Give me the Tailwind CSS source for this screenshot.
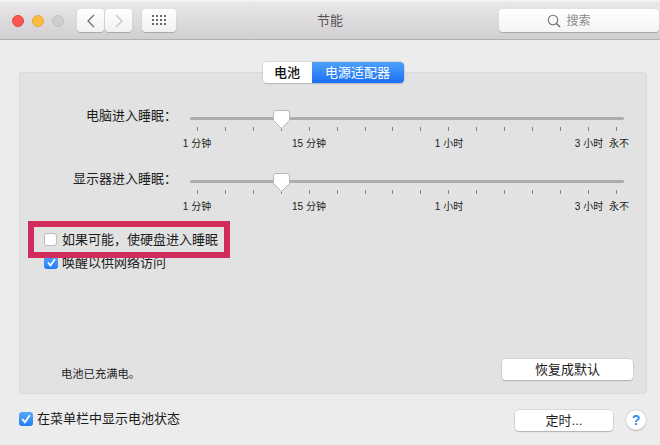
<!doctype html>
<html lang="zh">
<head>
<meta charset="utf-8">
<script src="https://cdn.jsdelivr.net/npm/@tailwindcss/browser@4"></script>
</head>
<body class="m-0">
<div class="relative flex h-[445px] w-[660px] flex-col overflow-hidden bg-[#ececec] font-['Liberation_Sans','Noto_Sans_CJK_SC',sans-serif] text-[13px] text-[#1c1c1c]">
  <!-- title bar -->
  <header class="relative flex h-[40px] shrink-0 items-center border-b border-b-[#b1b1b1] border-t-2 border-t-[#f2f2f2] bg-gradient-to-b from-[#e9e7e9] to-[#d1cfd1] pl-3 pr-[1px]">
    <div class="flex gap-2">
      <span class="h-3 w-3 rounded-full border border-[#e2463f] bg-[#fc5753]"></span>
      <span class="h-3 w-3 rounded-full border border-[#e1a73e] bg-[#fdbc40]"></span>
      <span class="h-3 w-3 rounded-full border border-[#c0c0c0] bg-[#cecece]"></span>
    </div>
    <div class="ml-[13px] flex gap-[1px]">
      <button class="flex h-[23px] w-[27px] items-center justify-center rounded-[4px] bg-gradient-to-b from-white to-[#f1f1f1] shadow-[0_1px_1px_#a8a8a8]">
        <svg width="10" height="14" viewBox="0 0 10 14" fill="none" stroke="#707070" stroke-width="1.3"><path d="M8 1 2 7l6 6"/></svg>
      </button>
      <button class="flex h-[23px] w-[27px] items-center justify-center rounded-[4px] bg-gradient-to-b from-white to-[#f1f1f1] shadow-[0_1px_1px_#a8a8a8]">
        <svg width="10" height="14" viewBox="0 0 10 14" fill="none" stroke="#c4c4c4" stroke-width="1.3"><path d="m2 1 6 6-6 6"/></svg>
      </button>
    </div>
    <button class="ml-[10px] flex h-[23px] w-[34px] items-center justify-center rounded-[4px] bg-gradient-to-b from-white to-[#f1f1f1] shadow-[0_1px_1px_#a8a8a8]">
      <svg width="15" height="11" viewBox="0 0 15 11" fill="#6b6b6b">
        <rect x="0" y="0" width="2" height="2"/><rect x="4" y="0" width="2" height="2"/><rect x="8" y="0" width="2" height="2"/><rect x="12" y="0" width="2" height="2"/>
        <rect x="0" y="4" width="2" height="2"/><rect x="4" y="4" width="2" height="2"/><rect x="8" y="4" width="2" height="2"/><rect x="12" y="4" width="2" height="2"/>
        <rect x="0" y="8" width="2" height="2"/><rect x="4" y="8" width="2" height="2"/><rect x="8" y="8" width="2" height="2"/><rect x="12" y="8" width="2" height="2"/>
      </svg>
    </button>
    <h1 class="absolute left-[305px] w-[50px] text-center text-[13px] font-normal leading-none text-[#555]">节能</h1>
    <div class="ml-auto flex h-[23px] w-[160px] items-center justify-center gap-[5px] rounded-[4px] bg-gradient-to-b from-white to-[#f4f4f4] pr-[20px] text-[12px] text-[#8a8a8a] shadow-[0_1px_1px_#a8a8a8]">
      <svg width="14" height="14" viewBox="0 0 14 14" fill="none" stroke="#6e6e6e" stroke-width="1.1"><circle cx="6" cy="6" r="4.7"/><path d="m9.4 9.4 3.6 3.6" stroke-width="1.4"/></svg>
      <span>搜索</span>
    </div>
  </header>

  <main class="flex flex-1 flex-col px-[13px] pl-[19px]">
    <!-- panel -->
    <section class="mt-[32px] flex h-[322px] w-[628px] flex-col rounded-[3px] border border-[#dadada] bg-[#e2e2e2]">
      <div class="-mt-[11px] flex justify-center">
        <div class="flex h-[21px] w-[141px] overflow-hidden rounded-[4px] text-[13px] leading-none shadow-[0_0_0_0.5px_#c2c2c2,0_1px_1px_#b0b0b0]">
          <span class="flex w-[49px] items-center justify-center bg-white font-medium text-[#111]">电池</span>
          <span class="flex flex-1 items-center justify-center bg-gradient-to-b from-[#4ea1fb] to-[#1b6ff3] text-white">电源适配器</span>
        </div>
      </div>

      <!-- slider 1 -->
      <div class="mt-[21px] flex h-[50px]">
        <div class="mt-[4px] w-[157px] whitespace-nowrap text-right text-[13px] leading-[16px]">电脑进入睡眠：</div>
        <div class="ml-[13px] w-[442px]">
          <div class="relative mt-[13px] h-[3px] w-[434px] rounded-full bg-[#acacac]">
            <svg class="absolute left-[83px] top-[-7px]" width="17" height="20" viewBox="0 0 17 20"><path d="M3 .5h11a2.5 2.5 0 0 1 2.5 2.5v7.5L8.500 18.500.5 10.500V3A2.500 2.500 0 0 1 3 .5z" fill="#fff" stroke="#b9b9b9"/></svg>
          </div>
          <div class="ml-[7px] mt-[7px] flex w-[420px] justify-between">
            <i class="h-[4px] w-px bg-[#858585]"></i><i class="h-[4px] w-px bg-[#858585]"></i><i class="h-[4px] w-px bg-[#858585]"></i><i class="h-[4px] w-px bg-[#858585]"></i><i class="h-[4px] w-px bg-[#858585]"></i><i class="h-[4px] w-px bg-[#858585]"></i><i class="h-[4px] w-px bg-[#858585]"></i><i class="h-[4px] w-px bg-[#858585]"></i><i class="h-[4px] w-px bg-[#858585]"></i><i class="h-[4px] w-px bg-[#858585]"></i><i class="h-[4px] w-px bg-[#858585]"></i><i class="h-[4px] w-px bg-[#858585]"></i><i class="h-[4px] w-px bg-[#858585]"></i><i class="h-[4px] w-px bg-[#858585]"></i><i class="h-[4px] w-px bg-[#858585]"></i><i class="h-[4px] w-px bg-[#858585]"></i>
          </div>
          <div class="-ml-[7px] mt-[7px] grid grid-cols-[repeat(16,28px)] text-[10px] leading-[12px] whitespace-nowrap">
            <span class="col-start-1 flex justify-center">1 分钟</span>
            <span class="col-start-5 flex justify-center">15 分钟</span>
            <span class="col-start-10 flex justify-center">1 小时</span>
            <span class="col-start-15 flex justify-center">3 小时</span>
            <span class="col-start-16 ml-[4px] flex justify-center">永不</span>
          </div>
        </div>
      </div>

      <!-- slider 2 -->
      <div class="mt-[13px] flex h-[50px]">
        <div class="mt-[4px] w-[157px] whitespace-nowrap text-right text-[13px] leading-[16px]">显示器进入睡眠：</div>
        <div class="ml-[13px] w-[442px]">
          <div class="relative mt-[13px] h-[3px] w-[434px] rounded-full bg-[#acacac]">
            <svg class="absolute left-[83px] top-[-7px]" width="17" height="20" viewBox="0 0 17 20"><path d="M3 .5h11a2.5 2.5 0 0 1 2.5 2.5v7.5L8.500 18.500.5 10.500V3A2.500 2.500 0 0 1 3 .5z" fill="#fff" stroke="#b9b9b9"/></svg>
          </div>
          <div class="ml-[7px] mt-[7px] flex w-[420px] justify-between">
            <i class="h-[4px] w-px bg-[#858585]"></i><i class="h-[4px] w-px bg-[#858585]"></i><i class="h-[4px] w-px bg-[#858585]"></i><i class="h-[4px] w-px bg-[#858585]"></i><i class="h-[4px] w-px bg-[#858585]"></i><i class="h-[4px] w-px bg-[#858585]"></i><i class="h-[4px] w-px bg-[#858585]"></i><i class="h-[4px] w-px bg-[#858585]"></i><i class="h-[4px] w-px bg-[#858585]"></i><i class="h-[4px] w-px bg-[#858585]"></i><i class="h-[4px] w-px bg-[#858585]"></i><i class="h-[4px] w-px bg-[#858585]"></i><i class="h-[4px] w-px bg-[#858585]"></i><i class="h-[4px] w-px bg-[#858585]"></i><i class="h-[4px] w-px bg-[#858585]"></i><i class="h-[4px] w-px bg-[#858585]"></i>
          </div>
          <div class="-ml-[7px] mt-[7px] grid grid-cols-[repeat(16,28px)] text-[10px] leading-[12px] whitespace-nowrap">
            <span class="col-start-1 flex justify-center">1 分钟</span>
            <span class="col-start-5 flex justify-center">15 分钟</span>
            <span class="col-start-10 flex justify-center">1 小时</span>
            <span class="col-start-15 flex justify-center">3 小时</span>
            <span class="col-start-16 ml-[4px] flex justify-center">永不</span>
          </div>
        </div>
      </div>

      <!-- checkboxes -->
      <div class="ml-[24px] mt-[14px] flex h-[16px] items-center gap-[5px] leading-none">
        <span class="h-[13px] w-[13px] rounded-[3px] border border-[#bdbdbd] bg-white"></span>
        <span>如果可能，使硬盘进入睡眠</span>
      </div>
      <div class="ml-[24px] mt-[7px] flex h-[16px] items-center gap-[4px] leading-none">
        <span class="flex h-[14px] w-[14px] items-center justify-center rounded-[3px] bg-gradient-to-b from-[#57a8fb] to-[#1f7cf5]">
          <svg width="11" height="11" viewBox="0 0 11 11" fill="none" stroke="#fff" stroke-width="1.800"><path d="m2 5.500 2.500 3L9 2"/></svg>
        </span>
        <span>唤醒以供网络访问</span>
      </div>

      <div class="mt-auto mb-[13px] flex items-end justify-between pl-[41px] pr-[13px]">
        <span class="-mb-[1px] text-[11.3px] leading-[14px]">电池已充满电。</span>
        <button class="h-[21px] w-[131px] rounded-[4px] bg-white text-[13px] leading-none shadow-[0_0_0_0.5px_#c4c4c4,0_1px_1px_#a5a5a5]">恢复成默认</button>
      </div>
    </section>

    <!-- footer row -->
    <div class="mt-[16px] flex h-[21px] items-center">
      <span class="-mt-[3px] flex h-[14px] w-[14px] items-center justify-center rounded-[3px] bg-gradient-to-b from-[#57a8fb] to-[#1f7cf5]">
        <svg width="12" height="12" viewBox="0 0 11 11" fill="none" stroke="#fff" stroke-width="1.700"><path d="m2 5.500 2.500 3L9 2"/></svg>
      </span>
      <span class="-mt-[4px] ml-[4px] leading-none">在菜单栏中显示电池状态</span>
      <button class="ml-auto mr-[14px] h-[21px] w-[98px] rounded-[4px] bg-white pb-[1px] text-[13px] leading-none shadow-[0_0_0_0.5px_#c4c4c4,0_1px_1px_#a5a5a5]">定时...</button>
      <span class="-mt-[2px] -ml-[1px] mr-[1px] flex h-[20px] w-[20px] items-center justify-center rounded-full bg-white text-[14px] font-bold leading-none text-[#2f8cf7] shadow-[0_0_0_0.5px_#c4c4c4,0_1px_1px_#a5a5a5]">?</span>
    </div>
  </main>

  <!-- annotation -->
  <div class="absolute left-[28px] top-[221px] h-[37px] w-[202px] border-[6px] border-[#d02c5e]"></div>
</div>
</body>
</html>
